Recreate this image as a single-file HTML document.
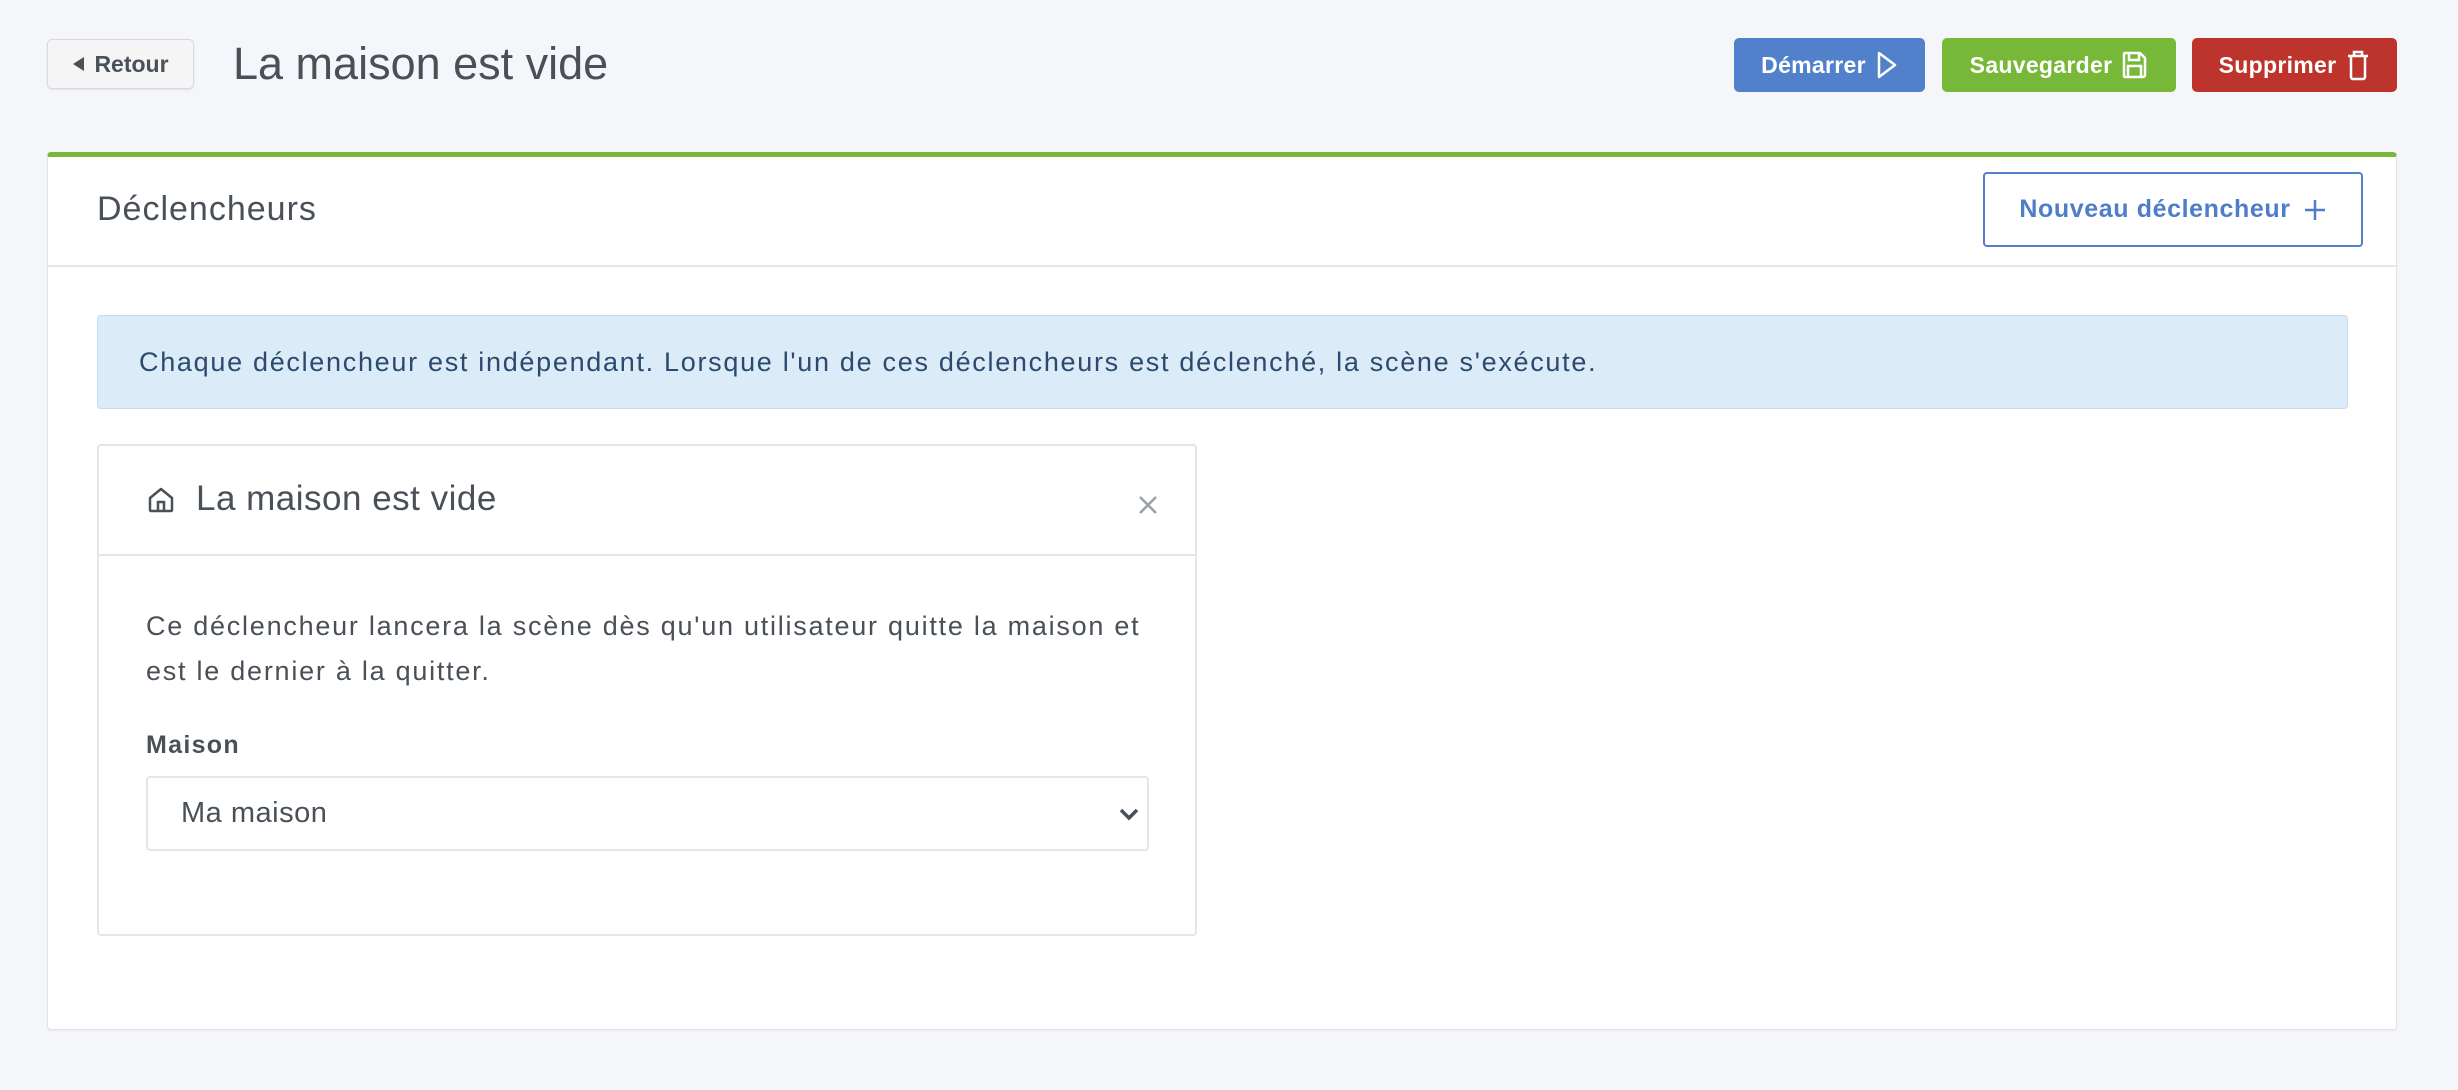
<!DOCTYPE html>
<html><head><meta charset="utf-8">
<style>
*{box-sizing:border-box;margin:0;padding:0}
html,body{width:2458px;height:1090px;overflow:hidden;background:#f5f6fa;font-family:"Liberation Sans",sans-serif;color:#495057}
.abs{position:absolute}
.btn{position:absolute;border-radius:5px;color:#fff;font-weight:bold;font-size:23px;display:flex;align-items:center;justify-content:center;gap:10px;letter-spacing:0.3px}
</style></head><body>
<div class="abs" style="left:47px;top:39px;width:147px;height:50px;border:1px solid #d7d9dd;border-radius:5px;background:#f5f5f6;box-shadow:0 1px 2px rgba(0,0,0,.08);display:flex;align-items:center;justify-content:center;font-size:23px;font-weight:bold;color:#495057;gap:8px">
<svg width="14" height="16" viewBox="0 0 14 16"><path d="M12 1L1 8l11 7z" fill="#495057"/></svg>Retour</div>
<div class="abs" style="left:233px;top:36px;font-size:45px;color:#495057;line-height:56px">La maison est vide</div>

<div class="btn" style="left:1734px;top:38px;width:191px;height:54px;background:#5181cb">Démarrer
<svg width="22" height="28" viewBox="0 0 22 28"><path d="M3 2l16 12L3 26z" fill="none" stroke="#fff" stroke-width="2.5" stroke-linejoin="round"/></svg></div>
<div class="btn" style="left:1942px;top:38px;width:234px;height:54px;background:#78b838">Sauvegarder
<svg width="26" height="28" viewBox="0 0 26 28"><path d="M3 2h15l5 5v17a2 2 0 0 1-2 2H3a1 1 0 0 1-1-1V3a1 1 0 0 1 1-1z" fill="none" stroke="#fff" stroke-width="2.5"/><path d="M7 2v7h10V2M6 26V15h13v11" fill="none" stroke="#fff" stroke-width="2.5"/></svg></div>
<div class="btn" style="left:2192px;top:38px;width:205px;height:54px;background:#bd342c">Supprimer
<svg width="24" height="32" viewBox="0 0 24 32"><path d="M2 7h20M8 7V3h8v4M5 7v21a2 2 0 0 0 2 2h10a2 2 0 0 0 2-2V7" fill="none" stroke="#fff" stroke-width="2.5"/></svg></div>

<div class="abs" style="left:47px;top:152px;width:2350px;height:878px;background:#fff;border:1px solid #e0e3e8;border-top:5px solid #78b838;border-radius:4px;box-shadow:0 1px 2px rgba(0,0,0,.05)">
  <div class="abs" style="left:0;top:0;width:100%;height:110px;border-bottom:2px solid #e3e6ea"></div>
  <div class="abs" style="left:49px;top:32px;font-size:34px;letter-spacing:1px;line-height:40px;color:#495057">Déclencheurs</div>
  <div class="abs" style="left:1935px;top:15px;width:380px;height:75px;border:2px solid #5181cb;border-radius:4px;color:#4e7ec8;font-weight:bold;font-size:25px;display:flex;align-items:center;justify-content:center;gap:12px;letter-spacing:0.6px">Nouveau déclencheur
  <svg width="24" height="24" viewBox="0 0 24 24"><path d="M12 2v20M2 12h20" stroke="#4e7ec8" stroke-width="2.5"/></svg></div>
  <div class="abs" style="left:49px;top:158px;width:2251px;height:94px;background:#dcebf8;border:1px solid #c6dcf1;border-radius:4px;color:#2b4a6e;font-size:27px;letter-spacing:1.7px;display:flex;align-items:center;padding-left:41px;white-space:nowrap">Chaque déclencheur est indépendant. Lorsque l'un de ces déclencheurs est déclenché, la scène s'exécute.</div>
  <div class="abs" style="left:49px;top:287px;width:1100px;height:492px;border:2px solid #e3e6ea;border-radius:4px">
    <div class="abs" style="left:0;top:0;width:100%;height:110px;border-bottom:2px solid #e3e6ea"></div>
    <svg class="abs" style="left:48px;top:40px" width="28" height="28" viewBox="0 0 28 28"><path d="M3 12L14 3l11 9v12a1 1 0 0 1-1 1H4a1 1 0 0 1-1-1z" fill="none" stroke="#495057" stroke-width="2.5" stroke-linejoin="round"/><path d="M11 25v-9h6v9" fill="none" stroke="#495057" stroke-width="2.5"/></svg>
    <div class="abs" style="left:97px;top:33px;font-size:35px;letter-spacing:0.5px;line-height:40px;color:#495057">La maison est vide</div>
    <svg class="abs" style="left:1039px;top:49px" width="20" height="20" viewBox="0 0 20 20"><path d="M2 2l16 16M18 2L2 18" stroke="#9aa0a8" stroke-width="2.5"/></svg>
    <div class="abs" style="left:47px;top:158px;width:1040px;font-size:27px;letter-spacing:1.75px;line-height:45px;color:#495057;white-space:nowrap">Ce déclencheur lancera la scène dès qu'un utilisateur quitte la maison et<br>est le dernier à la quitter.</div>
    <div class="abs" style="left:47px;top:285px;font-size:25px;letter-spacing:1.3px;font-weight:bold;color:#495057">Maison</div>
    <div class="abs" style="left:47px;top:330px;width:1003px;height:75px;border:2px solid #e3e6ea;border-radius:4px;font-size:29px;letter-spacing:0.5px;color:#495057;padding-left:33px;display:flex;align-items:center">Ma maison
      <svg class="abs" style="right:8px;top:30px" width="20" height="14" viewBox="0 0 20 14"><path d="M2 2l8 8 8-8" fill="none" stroke="#495057" stroke-width="3.5"/></svg>
    </div>
  </div>
</div>
</body></html>
